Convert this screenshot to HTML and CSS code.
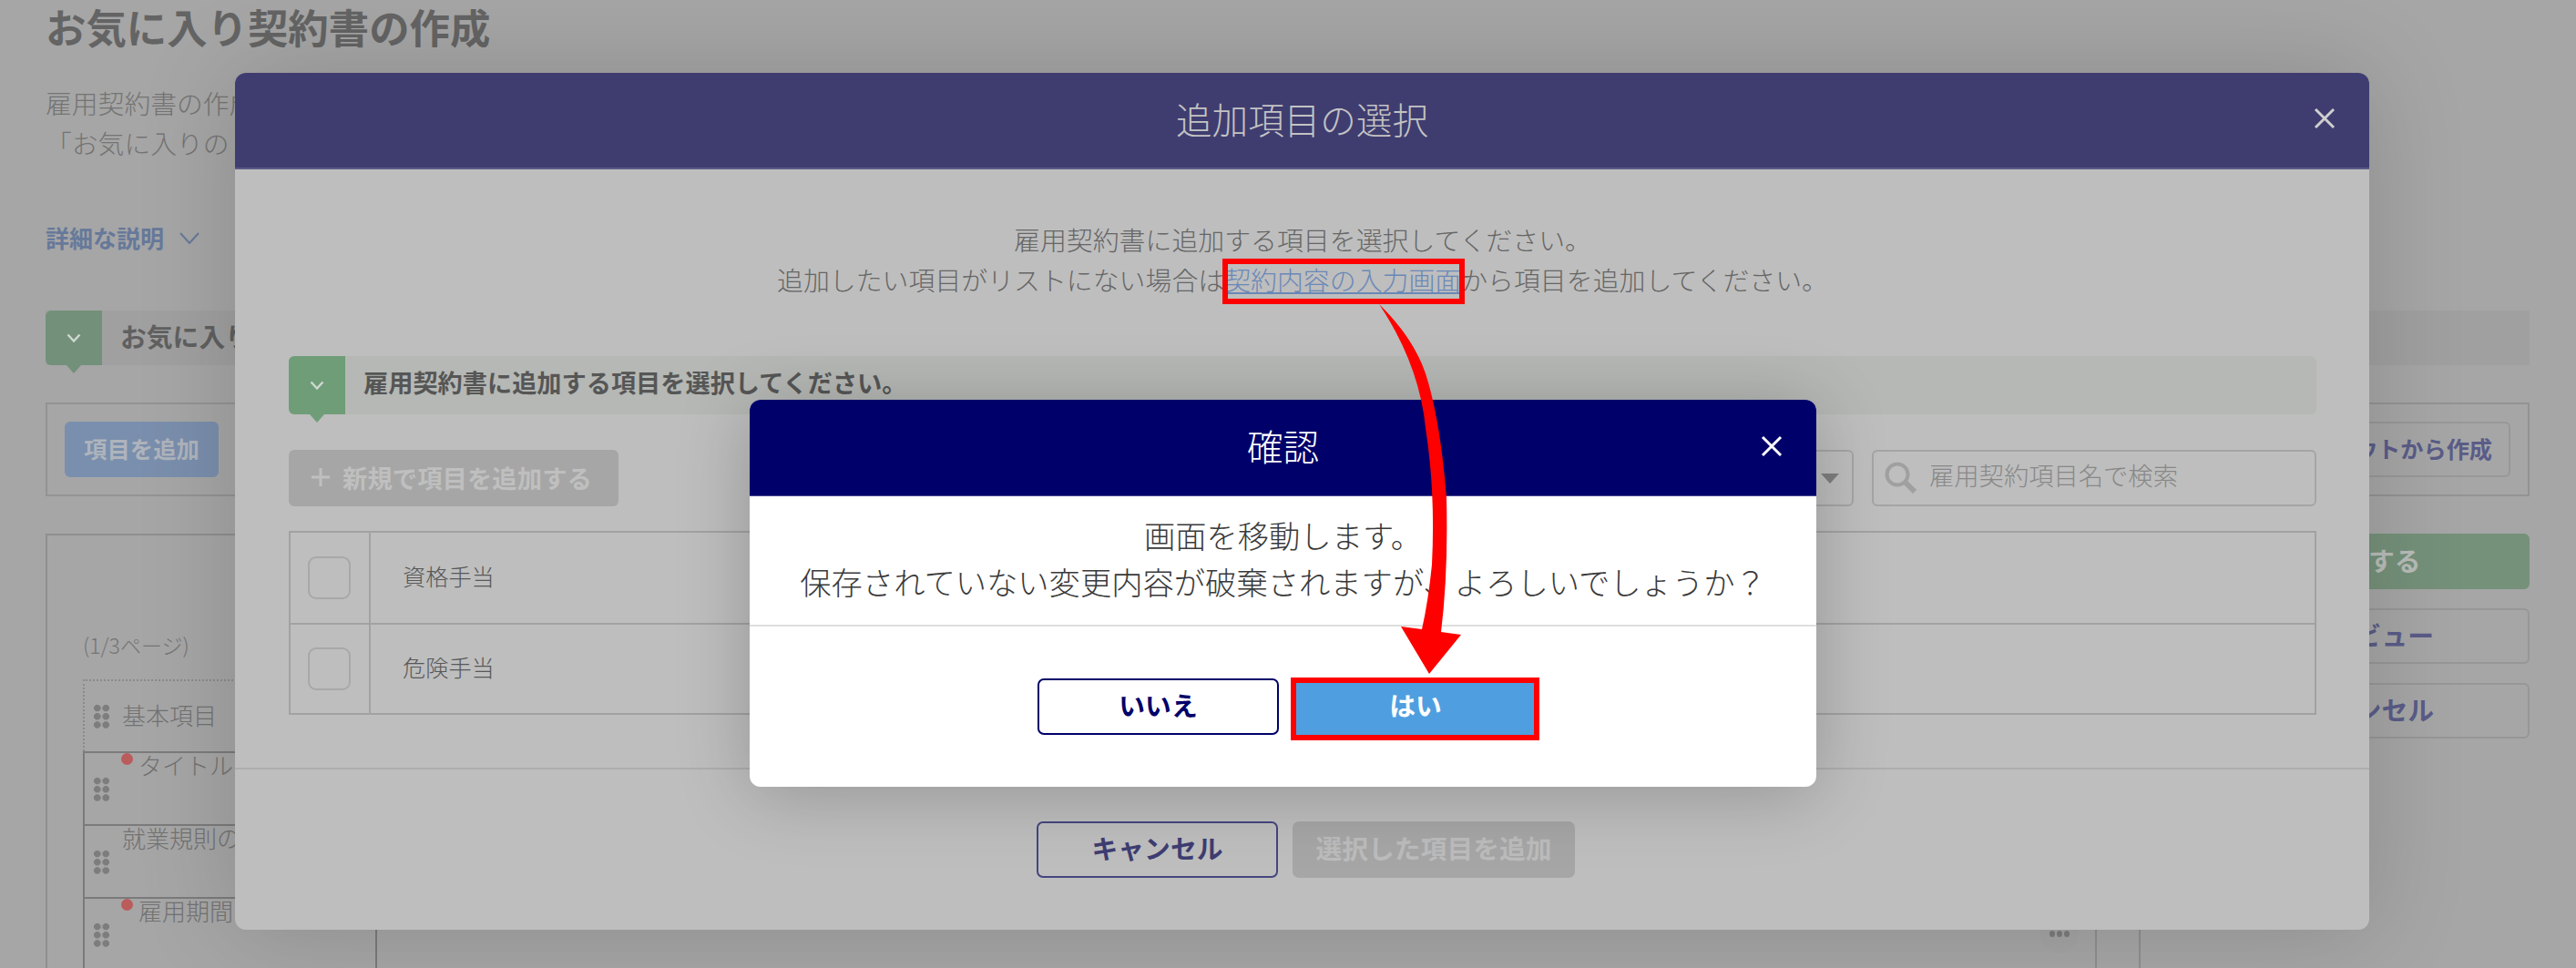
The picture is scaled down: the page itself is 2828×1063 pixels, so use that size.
FILE: index.html
```html
<!DOCTYPE html>
<html lang="ja">
<head>
<meta charset="utf-8">
<title>お気に入り契約書の作成</title>
<link rel="stylesheet" href="styles.css">
</head>
<body>
<div class="page">
  <h1 class="page-title">お気に入り契約書の作成</h1>
  <div class="desc">
    <p>雇用契約書の作成</p>
    <p>「お気に入りの</p>
  </div>
  <div class="details">詳細な説明
    <svg class="details-chev" viewBox="0 0 22 13"><path d="M1 1l10 11L21 1"/></svg>
  </div>
  <div class="section-bar">
    <span class="tag tag-dim"><svg class="tag-chev" viewBox="0 0 16 10"><path d="M1.5 1.5L8 8.5l6.5-7"/></svg></span>
    <span class="section-text">お気に入り契約書</span>
  </div>
  <div class="toolbar">
    <span class="btn-add">項目を追加</span>
    <span class="btn-layout">レイアウトから作成</span>
  </div>
  <div class="workspace">
    <div class="editor">
      <div class="page-no">(1/3ページ)</div>
      <div class="doc">
        <div class="list">
          <div class="row row-first"><span class="handle"></span><span class="row-text">基本項目</span></div>
          <div class="row"><span class="req"></span><span class="handle"></span><span class="row-text row-text-req">タイトル</span></div>
          <div class="row"><span class="handle"></span><span class="row-text">就業規則の</span></div>
          <div class="row"><span class="req"></span><span class="handle"></span><span class="row-text row-text-req">雇用期間</span></div>
        </div>
        <div class="sheet"><span class="more"><i></i><i></i><i></i></span></div>
      </div>
    </div>
    <div class="side">
      <span class="side-btn side-save">保存する</span>
      <span class="side-btn">プレビュー</span>
      <span class="side-btn">キャンセル</span>
    </div>
  </div>
</div>

<section class="modal modal-add">
  <header class="modal-head modal-head-add">
    <h2 class="modal-title">追加項目の選択</h2>
    <svg class="close" viewBox="0 0 24 24"><path d="M2 2l20 20M22 2L2 22"/></svg>
  </header>
  <div class="add-body">
    <div class="lead">
      <p>雇用契約書に追加する項目を選択してください。</p>
      <p>追加したい項目がリストにない場合は<a class="lead-link" href="#">契約内容の入力画面</a>から項目を追加してください。</p>
    </div>
    <div class="banner">
      <span class="tag"><svg class="tag-chev" viewBox="0 0 16 10"><path d="M1.5 1.5L8 8.5l6.5-7"/></svg></span>
      <span class="banner-text">雇用契約書に追加する項目を選択してください。</span>
    </div>
    <div class="tools">
      <span class="btn-new"><svg class="plus" viewBox="0 0 22 22"><path d="M11 1v20M1 11h20"/></svg>新規で項目を追加する</span>
      <div class="filters">
        <span class="select"><span class="caret"></span></span>
        <span class="search">
          <svg class="search-icon" viewBox="0 0 36 36"><circle cx="14" cy="14" r="11.5"/><path class="search-handle" d="M22.5 22.5L33 33"/></svg>
          <span class="placeholder">雇用契約項目名で検索</span>
        </span>
      </div>
    </div>
    <div class="table">
      <div class="t-row"><span class="t-check"><span class="checkbox"></span></span><span class="t-name">資格手当</span></div>
      <div class="t-row"><span class="t-check"><span class="checkbox"></span></span><span class="t-name">危険手当</span></div>
    </div>
  </div>
  <footer class="add-foot">
    <span class="btn-cancel">キャンセル</span>
    <span class="btn-disabled">選択した項目を追加</span>
  </footer>
</section>

<section class="modal modal-confirm">
  <header class="modal-head modal-head-confirm">
    <h2 class="modal-title">確認</h2>
    <svg class="close close-confirm" viewBox="0 0 24 24"><path d="M2 2l20 20M22 2L2 22"/></svg>
  </header>
  <div class="confirm-body">
    <p>画面を移動します。</p>
    <p>保存されていない変更内容が破棄されますが、よろしいでしょうか？</p>
  </div>
  <footer class="confirm-foot">
    <span class="btn-no">いいえ</span>
    <span class="btn-yes">はい</span>
  </footer>
</section>

<span class="mark mark-link"></span>
<span class="mark mark-yes"></span>
<svg class="arrow" viewBox="0 0 2828 1063"><path d="M1514 334Q1558 400 1565 470Q1576 540 1572 620Q1568 660 1561 691L1538 688L1569 740L1604 697L1582 694Q1590 630 1588 547Q1582 470 1568 420Q1556 375 1514 334Z"/></svg>
</body>
</html>
```

FILE: styles.css
```css
* { box-sizing: border-box; }
html, body { margin: 0; padding: 0; }
body {
  position: relative;
  width: 2828px;
  height: 1063px;
  overflow: hidden;
  background: #a6a6a6;
  font-family: "Noto Sans CJK JP", "Noto Sans", sans-serif;
  font-weight: 300;
  color: #6a6a6a;
}
p { margin: 0; }

/* dimmed page behind the modals */
.page { padding: 0 51px 0 50px; height: 1063px; overflow: hidden; }
.page-title { margin: 0; height: 60px; font-size: 44.4px; line-height: 58px; font-weight: 700; color: #646464; }
.desc { margin-top: 31px; font-size: 28.8px; line-height: 44px; color: #747474; }
.details {
  margin-top: 64px; margin-bottom: 1px; display: flex; align-items: center; gap: 17px;
  font-size: 26px; line-height: 36px; font-weight: 700; color: #66799a;
}
.details-chev { width: 22px; height: 13px; fill: none; stroke: #66799a; stroke-width: 2px; }

.section-bar {
  margin-top: 62px; height: 60px; display: flex; align-items: center; gap: 20px;
  background: #a0a0a0;
}
.tag {
  position: relative; flex: none; width: 62px; height: 100%;
  display: flex; align-items: center; justify-content: center;
  background: #6f9d78; border-radius: 6px 0 0 6px;
}
.tag::after {
  content: ""; position: absolute; left: 23px; top: 100%;
  border: 8px solid transparent; border-bottom-width: 0; border-top: 9px solid #6f9d78;
}
.tag-dim { background: #73907a; }
.tag-dim::after { border-top-color: #73907a; }
.tag-chev { width: 16px; height: 10px; fill: none; stroke: #cfd8d1; stroke-width: 2.4px; }
.section-text { padding-bottom: 5px; font-size: 28.8px; font-weight: 700; color: #606060; }

.toolbar {
  margin-top: 41px; height: 103px; padding: 0 19px; display: flex; align-items: center; justify-content: space-between;
  border: 2px solid #939393;
}
.btn-add {
  width: 169px; height: 61px; padding-bottom: 3px; display: flex; align-items: center; justify-content: center;
  background: #7a8fad; border-radius: 6px; color: #afb4bc; font-size: 25.4px; font-weight: 700;
}
.btn-layout {
  height: 61px; padding: 0 18px 3px; display: flex; align-items: center;
  border: 2px solid #989898; border-radius: 6px; color: #5a5c88; font-size: 25.2px; font-weight: 700;
}

.workspace { margin-top: 41px; display: flex; gap: 46px; height: 600px; }
.editor { flex: 1; border: 2px solid #8f8f8f; padding: 105px 0 0 39px; }
.page-no { font-size: 23px; line-height: 30px; color: #757575; }
.doc { margin-top: 23px; display: flex; }
.list { width: 323px; flex: none; border-right: 2px solid #7a7a7a; height: 400px; }
.row {
  position: relative; height: 80px; display: flex; align-items: center; padding-left: 9px; gap: 14px;
  border-top: 2px solid #7b7b7b; border-left: 2px solid #7b7b7b;
  font-size: 26px; color: #727272;
}
.row-first { height: 79px; border-top: 2px dotted #8a8a8a; border-left: 2px dotted #8a8a8a; }
.row-first .row-text { margin-top: 22px; }
.handle {
  flex: none; width: 18px; height: 27px;
  background: radial-gradient(circle at center, #7d7d7d 3.6px, transparent 4px) 0 0 / 9.5px 9.2px;
}
.row-text { align-self: flex-start; margin-top: -2px; line-height: 30px; white-space: nowrap; }
.row-text-req { margin-left: 18px; }
.req {
  position: absolute; left: 40px; top: 0; width: 13px; height: 13px; border-radius: 50%;
  background: #bb5c5c;
}
.sheet { flex: 1; height: 400px; display: flex; justify-content: flex-end; padding: 258px 18px 0 0; }
.more {
  width: 42px; height: 42px; border-radius: 50%; background: #a4a4a4;
  display: flex; align-items: center; justify-content: center; gap: 2px;
}
.more i { width: 6px; height: 7px; border-radius: 50%; background: #7c7c7c; }
.side {
  width: 429px; flex: none; padding-left: 73px; display: flex; flex-direction: column; gap: 21px;
  border-left: 2px solid #8f8f8f;
}
.side-btn {
  height: 61px; flex: none; padding-bottom: 5px; display: flex; align-items: center; justify-content: center;
  border: 2px solid #979797; border-radius: 6px; color: #5a5c88; font-size: 28.8px; font-weight: 700;
}
.side-save { background: #75917a; border-color: #75917a; color: #b9bdb9; }

/* modals */
.modal { position: absolute; display: flex; flex-direction: column; border-radius: 12px; overflow: hidden; }
.modal-add {
  left: 258px; top: 80px; width: 2343px; height: 941px;
  background: #bebebe; box-shadow: 0 0 110px rgba(0, 0, 0, .16);
}
.modal-confirm {
  left: 823px; top: 439px; width: 1171px; height: 425px;
  background: #fff; color: #333; box-shadow: 0 8px 80px rgba(0, 0, 0, .22);
}
.modal-head { position: relative; flex: none; height: 106px; padding-bottom: 4px; display: flex; align-items: center; justify-content: center; }
.modal-head-add { background: #3f3d70; color: #c3c3c3; border-bottom: 2px solid #5b5a86; }
.modal-head-confirm { background: #00006a; color: #fff; border-bottom: 1px solid #4a4a94; padding-bottom: 6px; }
.modal-title { margin: 0; font-size: 39.6px; font-weight: 300; line-height: 1; }
.close { position: absolute; right: 37px; top: 38px; width: 24px; height: 24px; fill: none; stroke: #cfcfcf; stroke-width: 3px; }
.close-confirm { right: 37px; top: 39px; stroke: #fff; }

.add-body { flex: 1; padding: 54px 58px 0 59px; }
.lead { text-align: center; font-size: 28.9px; line-height: 44px; color: #666; }
.lead-link { color: #6a88b8; text-decoration: underline; }
.banner {
  margin-top: 63px; height: 64px; display: flex; align-items: center; gap: 20px;
  background: #b5b8b4; border-radius: 6px;
}
.banner-text { padding-bottom: 9px; font-size: 27.2px; font-weight: 700; color: #565656; }
.tools { margin-top: 39px; height: 62px; display: flex; justify-content: space-between; }
.btn-new {
  width: 362px; padding: 0 0 3px 24px; display: flex; align-items: center; gap: 13px;
  background: #a6a6a6; border-radius: 6px; color: #bfbfbf; font-size: 27.4px; font-weight: 700; white-space: nowrap;
}
.plus { width: 22px; height: 22px; fill: none; stroke: #bfbfbf; stroke-width: 3px; flex: none; }
.filters { display: flex; gap: 20px; }
.select {
  width: 330px; display: flex; align-items: center; justify-content: flex-end; padding-right: 14px;
  border: 2px solid #a5a5a5; border-radius: 6px;
}
.caret { border: 10px solid transparent; border-bottom-width: 0; border-top: 11px solid #7f7f7f; }
.search {
  width: 488px; padding-left: 12px; display: flex; align-items: center; gap: 13px;
  border: 2px solid #a5a5a5; border-radius: 6px;
}
.search-icon { width: 36px; height: 36px; flex: none; fill: none; stroke: #a0a0a0; stroke-width: 4px; }
.search-handle { stroke-width: 6px; }
.placeholder { padding-bottom: 9px; font-size: 27.3px; color: #888; white-space: nowrap; }
.table { margin-top: 27px; border: 2px solid #a2a2a2; }
.t-row { height: 99px; display: flex; }
.t-row + .t-row { border-top: 2px solid #a2a2a2; }
.t-check { width: 88px; flex: none; padding-right: 2px; display: flex; align-items: center; justify-content: center; border-right: 2px solid #a2a2a2; }
.checkbox { width: 47px; height: 47px; border: 2px solid #a8a8a8; border-radius: 9px; background: #bebebe; }
.t-name { padding: 0 0 6px 35px; display: flex; align-items: center; font-size: 25.2px; color: #585858; }

.add-foot {
  flex: none; height: 178px; padding: 57px 0 0 8px; display: flex; justify-content: center; align-items: flex-start; gap: 16px;
  border-top: 2px solid #adadad;
}
.btn-cancel {
  width: 265px; height: 62px; padding-bottom: 6px; display: flex; align-items: center; justify-content: center;
  border: 2px solid #45467f; border-radius: 7px; color: #3e3d72; font-size: 28.8px; font-weight: 700;
}
.btn-disabled {
  width: 310px; height: 62px; padding-bottom: 6px; display: flex; align-items: center; justify-content: center;
  background: #a6a6a6; border-radius: 7px; color: #bcbcbc; font-size: 28.8px; font-weight: 700;
}

.confirm-body {
  flex: none; height: 143px; padding-top: 17px; text-align: center; font-size: 34.3px; line-height: 51px; color: #3a3a3a;
  border-bottom: 2px solid #dedede;
}
.confirm-foot { flex: 1; padding: 57px 0 0 11px; display: flex; justify-content: center; align-items: flex-start; gap: 15px; }
.btn-no {
  width: 265px; height: 62px; padding-bottom: 6px; display: flex; align-items: center; justify-content: center;
  border: 2px solid #00006a; border-radius: 7px; color: #00006a; font-size: 28.8px; font-weight: 700;
}
.btn-yes {
  width: 270px; height: 62px; padding-bottom: 6px; display: flex; align-items: center; justify-content: center;
  background: #4f9fe0; color: #fff; font-size: 28.8px; font-weight: 700;
}

/* red annotations drawn over the screenshot */
.mark { position: absolute; border: 6px solid #f00; }
.mark-link { left: 1342px; top: 284px; width: 266px; height: 50px; }
.mark-yes { left: 1417px; top: 744px; width: 273px; height: 69px; }
.arrow { position: absolute; left: 0; top: 0; width: 2828px; height: 1063px; fill: #f00; pointer-events: none; }
```
